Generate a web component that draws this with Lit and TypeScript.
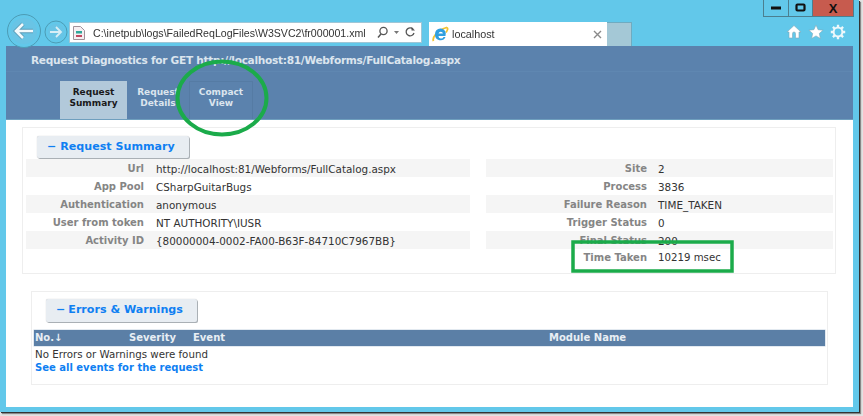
import { LitElement, html, css } from "lit";
import { customElement } from "lit/decorators.js";

const left = [
  ["Url", "http://localhost:81/Webforms/FullCatalog.aspx"],
  ["App Pool", "CSharpGuitarBugs"],
  ["Authentication", "anonymous"],
  ["User from token", "NT AUTHORITY\\IUSR"],
  ["Activity ID", "{80000004-0002-FA00-B63F-84710C7967BB}"],
];
const right = [
  ["Site", "2"],
  ["Process", "3836"],
  ["Failure Reason", "TIME_TAKEN"],
  ["Trigger Status", "0"],
  ["Final Status", "200"],
  ["Time Taken", "10219 msec"],
];

@customElement("app-root")
export class AppRoot extends LitElement {
  static styles = css`
    :host { display: block; width: 863px; height: 416px; background: #e2e2e2; overflow: hidden; position: relative; font-family: "DejaVu Sans", Verdana, sans-serif; }
    .window { width: 859px; height: 412px; background: #62c8ea; box-shadow: 1px 1px 0 #333, 2px 2px 1px #888; display: flex; flex-direction: column; filter: blur(0.55px); }
    .chrome { height: 46px; flex: none; position: relative; display: flex; align-items: flex-end; padding-left: 8px; }
    .nav { display: flex; align-items: center; gap: 2px; height: 36px; margin: 0 1px -3px -2px; align-self: flex-end; }
    .fwd { margin-top: 2px; }
    .addr { width: 353px; height: 21px; margin: 0 7px 3px 0; background: #fff; border: 1px solid #9fc6d6; box-sizing: border-box; display: flex; align-items: center; padding: 0 3px 0 2px; gap: 7px; font: 10.6px "Liberation Sans", Arial, sans-serif; color: #333; white-space: nowrap; }
    .addr .url { flex: 1; }
    .addr svg { flex: none; }
    .tab { width: 178px; height: 24px; background: #fff; box-sizing: border-box; display: flex; align-items: center; padding: 0 5px 0 3px; gap: 3px; font: 10.8px "Liberation Sans", Arial, sans-serif; color: #333; }
    .tab .t { flex: 1; }
    .newtab { width: 25px; height: 24px; box-sizing: border-box; background: #a4c8d6; border: 1px solid #6fabc0; border-bottom: none; border-left: none; }
    .tools { margin-left: auto; margin-right: 13px; display: flex; gap: 6px; align-self: flex-end; margin-bottom: 6px; }
    .ctl { position: absolute; top: 0; right: 5px; width: 91px; height: 17px; display: flex; border: 1px solid #4b7f90; border-top: none; box-sizing: border-box; }
    .ctl div { display: flex; align-items: center; justify-content: center; box-sizing: border-box; }
    .ctl .m { width: 25px; border-right: 1px solid #4b7f90; }
    .ctl .x { width: 24px; border-right: 1px solid #4b7f90; }
    .ctl .c { flex: 1; background: #c75b4e; color: #111; font: bold 13px "Liberation Sans", Arial, sans-serif; }
    .content { flex: 1; margin: 0 6px 5px; background: #fff; display: flex; flex-direction: column; min-height: 0; }
    .head { height: 74px; flex: none; background: #5b82ad; display: flex; flex-direction: column; border-bottom: 1px solid #6f9fbe; box-sizing: border-box; }
    h1 { margin: 0; font-size: 10.6px; letter-spacing: -0.3px; line-height: 14px; font-weight: bold; color: #dbe5ee; padding: 7px 0 0 25px; height: 26px; box-sizing: border-box; white-space: nowrap; border-bottom: 1px solid #5f87b1; }
    .tabs { display: flex; margin: 9px 0 0 54px; flex: 1; }
    .tb { font-size: 9px; font-weight: bold; line-height: 11px; text-align: center; color: #dbe5ee; padding-top: 6px; box-sizing: border-box; }
    .tb.on { width: 67px; background: #b2c9da; color: #1a1a1a; }
    .tb.d { width: 62px; }
    .tb.cv { width: 64px; border: 1px solid #557ba4; border-bottom: none; padding-top: 5px; }
    .main { flex: 1; padding: 7px 17px 0 16px; display: flex; flex-direction: column; }
    .panel { border: 1px solid #eeeeee; box-sizing: border-box; }
    .summary { height: 147px; padding: 8px 3px 0 3px; }
    .btn { height: 22px; box-sizing: border-box; background: #e8edf2; border-radius: 2px; box-shadow: 1px 1px 0 #aab0b5, 0 0 1px #bbb; color: #0f7ff2; font-size: 11.1px; font-weight: bold; line-height: 22px; white-space: nowrap; display: flex; }
    .btn b { margin: 0 4px 0 10px; font-weight: bold; }
    .btn1 { width: 152px; margin-left: 11px; }
    .btn2 { width: 151px; height: 23px; margin: 0 0 8px 12px; }
    .btn2 b { margin-right: 3px; }
    .cols { display: grid; grid-template-columns: 444px 347px; column-gap: 16px; margin-top: 1px; }
    .row { display: grid; height: 18px; align-items: center; line-height: 18px; white-space: nowrap; font-size: 10.4px; color: #333; }
    .l .row { grid-template-columns: 118px 1fr; column-gap: 12px; }
    .r .row { grid-template-columns: 161px 1fr; column-gap: 11px; }
    .row:nth-child(odd) { background: #f5f5f5; }
    .row span { position: relative; top: 1px; }
    .row:nth-child(6) { font-size: 10.2px; background: none; }
    .row:nth-child(6) span { top: 0; }
    .row span:first-child { text-align: right; font-weight: bold; font-size: 10px; color: #858585; }
    .errors { margin: 17px 8px 0 9px; height: 94px; padding: 7px 2px 0 2px; }
    .th { height: 16px; background: #5b7fa6; color: #e8eef4; font-size: 10px; font-weight: bold; line-height: 16px; display: grid; grid-template-columns: 94px 64px 356px 1fr; padding-left: 1px; box-shadow: 0 0 0 0.5px #c5d3e2; }
    .th span { white-space: nowrap; }
    .msg { font-size: 10.25px; color: #333; line-height: 14px; margin-top: 1px; padding-left: 1px; }
    .link { font-size: 10px; font-weight: bold; color: #0f7ff2; line-height: 13px; padding-left: 1px; }
    .ring { position: absolute; left: 0; top: 0; pointer-events: none; filter: blur(0.4px); }
  `;

  row(r: string[]) {
    return html`<div class="row"><span>${r[0]}</span><span>${r[1]}</span></div>`;
  }

  render() {
    return html`
      <div class="window">
        <div class="chrome">
          <div class="nav">
            <svg width="36" height="36" viewBox="0 0 36 36">
              <circle cx="18" cy="18" r="16.5" fill="#62c8ea" stroke="#4c9cb5" stroke-width="1"/>
              <circle cx="18" cy="18" r="13" fill="#7fb6d6" opacity=".25"/>
              <path d="M27 18H11M17 11l-7 7 7 7" fill="none" stroke="#5c9db8" stroke-width="4.4"/>
              <path d="M27 18H11M17 11l-7 7 7 7" fill="none" stroke="#f2fafd" stroke-width="2.6"/>
            </svg>
            <svg class="fwd" width="24" height="24" viewBox="0 0 24 24">
              <circle cx="12" cy="12" r="11" fill="#62c8ea" stroke="#4c9cb5" stroke-width="1"/>
              <circle cx="12" cy="12" r="8" fill="#7fb6d6" opacity=".25"/>
              <path d="M6 12h10M12 7l5 5-5 5" fill="none" stroke="#d8eef6" stroke-width="1.8"/>
            </svg>
          </div>
          <div class="addr">
            <svg width="14" height="14" viewBox="0 0 14 14">
              <path d="M1.5 .5h7l4 4v9h-11z" fill="#f6eff2" stroke="#a0929a"/>
              <rect x="4" y="5" width="6" height="2.500" fill="#2fa79a"/>
              <rect x="4" y="9" width="6" height="2" fill="#c0475f"/>
            </svg>
            <span class="url">C:\\inetpub\\logs\\FailedReqLogFiles\\W3SVC2\\fr000001.xml</span>
            <svg width="42" height="13" viewBox="0 0 42 13">
              <circle cx="7.5" cy="5" r="3.6" fill="none" stroke="#555" stroke-width="1.3"/>
              <path d="M5 8l-3 3.5" stroke="#555" stroke-width="1.5"/>
              <path d="M18 5h5l-2.500 3z" fill="#777"/>
              <path d="M37 3a4 4 0 1 0 1 4" fill="none" stroke="#555" stroke-width="1.3"/>
              <path d="M35.500 1v3.500H39z" fill="#555"/>
            </svg>
          </div>
          <div class="tab">
            <svg width="17" height="16" viewBox="0 0 17 16">
              <path d="M1.500 15c-1.500-3 3-10.500 13-13.500 2 .5 1 3 -.5 5" fill="none" stroke="#f2c230" stroke-width="1.800"/>
              <path d="M3 9a5.500 5.500 0 1 1 10.500 1H6.500a2.600 2.600 0 0 0 5 1h2a5.500 5.500 0 0 1-10.500-2zM6.500 7.500h4.500a2.300 2.300 0 0 0-4.500 0z" fill="#2f9fe0" fill-rule="evenodd"/>
            </svg>
            <span class="t">localhost</span>
            <svg width="9" height="9" viewBox="0 0 9 9"><path d="M1 1l7 7M8 1L1 8" stroke="#8a8a8a" stroke-width="1.400"/></svg>
          </div>
          <div class="newtab"></div>
          <div class="tools">
            <svg width="16" height="16" viewBox="0 0 16 16">
              <path d="M8 1.500L1 8h2v6h3.500V9.500a1.500 1.500 0 0 1 3 0V14H13V8h2z" fill="#fff" stroke="#7fa9b8" stroke-width=".6"/>
            </svg>
            <svg width="16" height="16" viewBox="0 0 16 16">
              <path d="M8 1l2.100 4.700 5 .5-3.800 3.300 1.100 5L8 11.900 3.600 14.500l1.100-5L.9 6.200l5-.5z" fill="#fff" stroke="#7fa9b8" stroke-width=".6"/>
            </svg>
            <svg width="16" height="16" viewBox="0 0 16 16">
              <path d="M8 .8v3M8 12.200v3M.8 8h3M12.200 8h3M2.900 2.900l2.100 2.100M11 11l2.100 2.100M13.100 2.900L11 5M5 11l-2.100 2.100" stroke="#eef8fb" stroke-width="2.300"/>
              <circle cx="8" cy="8" r="4.400" fill="#62c8ea" stroke="#eef8fb" stroke-width="2"/>
            </svg>
          </div>
          <div class="ctl">
            <div class="m"><svg width="11" height="4"><rect y=".5" width="10" height="3" fill="#111"/></svg></div>
            <div class="x"><svg width="12" height="10"><rect x="1.500" y="1.500" width="8" height="6" rx="1" fill="none" stroke="#111" stroke-width="2.200"/></svg></div>
            <div class="c">X</div>
          </div>
        </div>
        <div class="content">
          <div class="head">
            <h1>Request Diagnostics for GET http://localhost:81/Webforms/FullCatalog.aspx</h1>
            <div class="tabs">
              <div class="tb on">Request<br />Summary</div>
              <div class="tb d">Request<br />Details</div>
              <div class="tb cv">Compact<br />View</div>
            </div>
          </div>
          <div class="main">
            <div class="panel summary">
              <div class="btn btn1"><b>−</b>Request Summary</div>
              <div class="cols">
                <div class="l">${left.map((r) => this.row(r))}</div>
                <div class="r">${right.map((r) => this.row(r))}</div>
              </div>
            </div>
            <div class="panel errors">
              <div class="btn btn2"><b>−</b>Errors &amp; Warnings</div>
              <div class="th"><span>No.↓</span><span>Severity</span><span>Event</span><span>Module Name</span></div>
              <div class="msg">No Errors or Warnings were found</div>
              <div class="link">See all events for the request</div>
            </div>
          </div>
        </div>
      </div>
      <svg class="ring" width="863" height="416" viewBox="0 0 863 416">
        <ellipse cx="222" cy="98" rx="44.500" ry="36.500" fill="none" stroke="#1bab4a" stroke-width="4"/>
        <rect x="573" y="242" width="159" height="29" fill="none" stroke="#1bab4a" stroke-width="3.500"/>
      </svg>
    `;
  }
}
